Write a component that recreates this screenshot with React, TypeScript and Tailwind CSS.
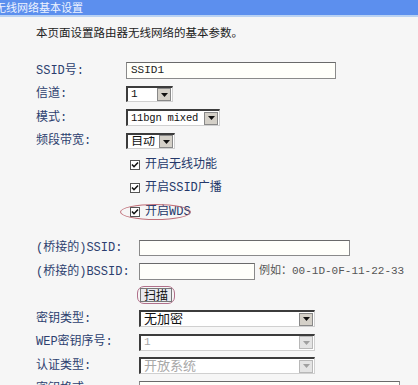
import React from "react";

const LABEL = "text-[12px] text-[#2d3f6f] leading-none";
const FONT = { fontFamily: '"Liberation Mono", "Noto Sans CJK SC", monospace' };
const CJK = { fontFamily: '"Noto Sans CJK SC", "Liberation Sans", sans-serif' };

function Arrow({ disabled }: { disabled?: boolean }) {
  return (
    <span
      className={`flex h-[13px] w-[14px] shrink-0 items-center justify-center border ${
        disabled ? "border-[#b8b8b8] bg-[#e4e4e4]" : "border-[#888] bg-[#d4d0c8]"
      }`}
    >
      <svg width="7" height="4" viewBox="0 0 7 4">
        <path d="M0 0h7L3.5 4z" fill={disabled ? "#a0a0a0" : "#111"} />
      </svg>
    </span>
  );
}

function Select({
  text,
  className,
  textClass = "text-[11px]",
  disabled,
}: {
  text: string;
  className: string;
  textClass?: string;
  disabled?: boolean;
}) {
  return (
    <div
      className={`flex items-center border-t-2 border-l-2 border-r border-b border-t-[#3c3c3c] border-l-[#3c3c3c] border-r-[#d0d0d0] border-b-[#d0d0d0] bg-white pr-[1px] ${className}`}
    >
      <span
        className={`flex-1 overflow-hidden whitespace-nowrap pl-[3px] leading-none ${textClass} ${
          disabled ? "text-[#a8a8a8]" : "text-[#111]"
        }`}
        style={FONT}
      >
        {text}
      </span>
      <Arrow disabled={disabled} />
    </div>
  );
}

function TextInput({ value, className }: { value?: string; className: string }) {
  return (
    <div
      className={`flex items-center border border-[#8a8a8a] border-t-[#6a6a6a] bg-[#fffffa] pl-[4px] text-[11px] leading-none text-[#222] ${className}`}
      style={FONT}
    >
      {value}
    </div>
  );
}

function Check({ label }: { label: string }) {
  return (
    <div className="flex items-center gap-[5px]">
      <svg width="10" height="10" viewBox="0 0 10 10">
        <rect x="0.5" y="0.5" width="9" height="9" fill="#fff" stroke="#555" />
        <path d="M2 4.5l2 2.2L8 2.5" fill="none" stroke="#111" strokeWidth="1.6" />
      </svg>
      <span className="text-[12px] leading-none text-[#24386a]" style={FONT}>
        {label}
      </span>
    </div>
  );
}

function Row({
  label,
  wide,
  children,
}: {
  label?: string;
  wide?: boolean;
  children?: React.ReactNode;
}) {
  return (
    <div className="flex h-[23.5px] items-center">
      <div className={`${wide ? "w-[103px]" : "w-[90px]"} shrink-0 whitespace-nowrap ${LABEL}`} style={FONT}>
        {label}
      </div>
      {children}
    </div>
  );
}

export default function App() {
  return (
    <div className="h-[385px] w-[418px] overflow-hidden bg-[#f6f6f6]">
      <div className="h-[15px] overflow-hidden bg-[#5c8fee]">
        <div className="-ml-[5px] text-[11px] leading-[15px] text-[#eef3ff]" style={CJK}>
          无线网络基本设置
        </div>
      </div>
      <div className="h-[2px] bg-[#b9d2f3]" />

      <div className="pl-[36px]">
        <div className="flex h-[32px] items-center text-[11.5px] text-[#222]" style={CJK}>
          本页面设置路由器无线网络的基本参数。
        </div>

        <div className="mt-[10px]">
          <Row label="SSID号:">
            <TextInput value="SSID1" className="h-[17px] w-[210px]" />
          </Row>
          <Row label="信道:">
            <Select text="1" className="h-[16px] w-[47px]" />
          </Row>
          <Row label="模式:">
            <Select text="11bgn mixed" textClass="text-[10.5px] tracking-[-0.2px]" className="h-[17px] w-[94px]" />
          </Row>
          <Row label="频段带宽:">
            <Select text="自动" textClass="text-[12px]" className="h-[16px] w-[49px]" />
          </Row>
        </div>

        <div className="pl-[94px]">
          <div className="flex h-[23.5px] items-center">
            <Check label="开启无线功能" />
          </div>
          <div className="flex h-[23.5px] items-center">
            <Check label="开启SSID广播" />
          </div>
          <div className="relative flex h-[23.5px] items-center">
            <Check label="开启WDS" />
            <div className="absolute -left-[10px] top-[4px] h-[16px] w-[71px] rounded-[50%] border border-[#c0707a]" />
          </div>
        </div>

        <div className="mt-[13px]">
          <Row label="(桥接的)SSID:" wide>
            <TextInput className="h-[16px] w-[211px]" />
          </Row>
          <Row label="(桥接的)BSSID:" wide>
            <TextInput className="h-[17px] w-[116px]" />
            <span className="ml-[4px] whitespace-nowrap text-[11px] leading-none text-[#555]" style={FONT}>
              例如：00-1D-0F-11-22-33
            </span>
          </Row>
          <Row wide>
            <div className="-ml-[2px] flex h-[18px] items-center rounded-[7px] border border-[#b0708a] px-[2px]">
              <div
                className="flex h-[14px] items-center border border-[#777] bg-[#e9e9ef] px-[3px] text-[12px] leading-none text-[#111]"
                style={CJK}
              >
                扫描
              </div>
            </div>
          </Row>
          <Row label="密钥类型:" wide>
            <Select text="无加密" textClass="text-[13px]" className="h-[17px] w-[176px]" />
          </Row>
          <Row label="WEP密钥序号:" wide>
            <Select text="1" className="h-[17px] w-[176px]" disabled />
          </Row>
          <Row label="认证类型:" wide>
            <Select text="开放系统" textClass="text-[13px]" className="h-[17px] w-[176px]" disabled />
          </Row>
          <Row label="密钥格式:" wide>
            <TextInput className="h-[17px] w-[261px]" />
          </Row>
        </div>
      </div>
    </div>
  );
}
